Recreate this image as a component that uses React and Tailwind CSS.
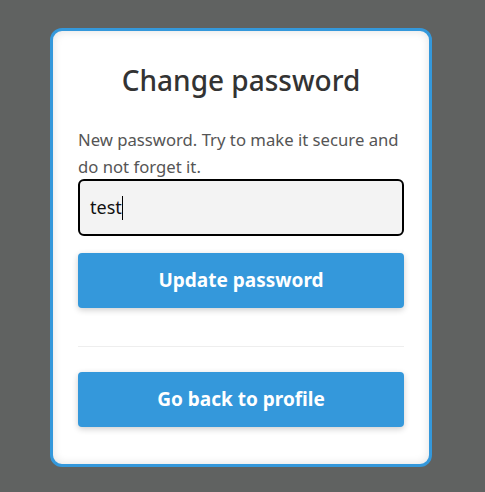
export default function App() {
  return (
    <div className="w-[485px] h-[492px] bg-[#606261] pt-[28px] pl-[50px]" style={{ fontFamily: '"Noto Sans", "Open Sans", sans-serif' }}>
      <div className="w-[382px] h-[439px] border-[3px] border-[#3498db] rounded-[12px] bg-white shadow-[inset_0_0_10px_rgba(0,0,0,0.12)] px-[25px] pt-[29px]">
        <h1 className="text-center text-[28px] leading-[40px] font-medium text-[#333]">Change password</h1>
        <p className="mt-[26px] text-[16.7px] leading-[27px] text-[#555]">New password. Try to make it secure and do not forget it.</p>
        <div className="mt-[-1px] h-[57px] border-2 border-black rounded-[6px] bg-[#f3f3f3] flex items-center px-[10px] text-[18px] text-[#111]">
          test<span className="inline-block w-[1px] h-[24px] bg-black"></span>
        </div>
        <button className="mt-[17px] w-full h-[55px] rounded-[4px] bg-[#3498db] text-white font-bold text-[19px] shadow-[0_2px_6px_rgba(0,0,0,0.2)]">Update password</button>
        <div className="mt-[38px] h-[1px] bg-[#eee]"></div>
        <button className="mt-[25px] w-full h-[55px] rounded-[4px] bg-[#3498db] text-white font-bold text-[19px] shadow-[0_2px_6px_rgba(0,0,0,0.2)]">Go back to profile</button>
      </div>
    </div>
  );
}
